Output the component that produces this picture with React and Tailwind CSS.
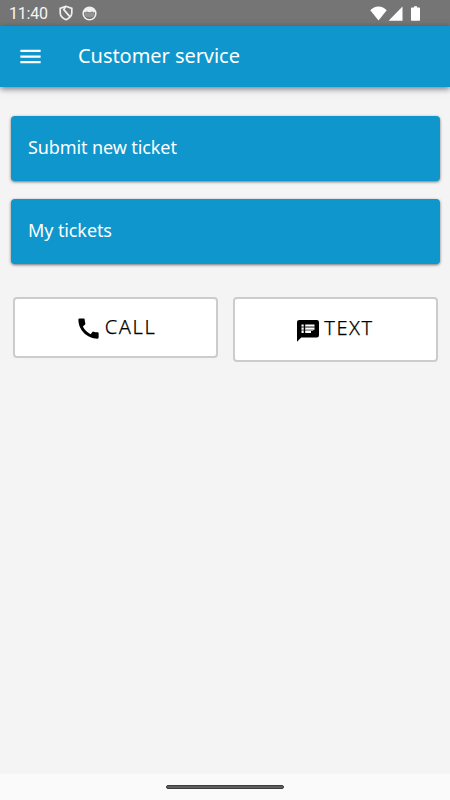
import { MdMenu, MdCall } from 'react-icons/md'

const items = ['Submit new ticket', 'My tickets']

function StatusBar() {
  return (
    <div className="h-[26px] shrink-0 bg-[#757575] text-white flex items-center pl-[9px] pr-[30px]">
      <span className="font-[Roboto] text-[16px] leading-[26px] w-[50px] pt-px tracking-[-0.2px] text-[#f5f5f5]">11:40</span>
      <svg className="w-[14px] h-4" viewBox="0 0 14 16" fill="none" stroke="#f0f0f0" strokeWidth="1.7">
        <path d="M7 1.3 1.2 3.4v4.4c0 3.2 2.3 5.6 5.8 6.9 3.5-1.3 5.8-3.7 5.8-6.9V3.4z" />
        <path d="M6.6 1.5 4.8 4.6 10.8 11.6" strokeWidth="1.7" />
      </svg>
      <svg className="w-[15px] h-[15px] ml-[9px]" viewBox="0 0 15 15">
        <circle cx="7.5" cy="7.5" r="6.3" fill="none" stroke="#f0f0f0" strokeWidth="1.6" />
        <path d="M1.8 5.5A6 6 0 0 1 13.2 5.5L11.8 6.6 10.5 5.4 7.5 6.2 4.5 5.4 3.2 6.6z" fill="#f0f0f0" />
        <path d="M3 6.5h9v3.2q-1 1.6-4.5 1.6T3 9.7z" fill="#f0f0f0" fillOpacity=".25" />
      </svg>
      <div className="ml-auto flex items-center">
        <svg className="w-[17px] h-[15px]" viewBox="0 0 17 15" fill="#fff">
          <path d="M8.5 14.6.3 4.2C2.5 2 5.3.4 8.5.4s6 1.6 8.2 3.8z" />
        </svg>
        <svg className="w-[15px] h-[15px] ml-px" viewBox="0 0 15 15" fill="#fff">
          <path d="M14.5.4v14.4H.6z" />
        </svg>
        <svg className="w-[9px] h-[15px] ml-2" viewBox="0 0 9 15" fill="#fff">
          <path d="M3 .2h3v1.3h2.2q.8 0 .8.8v11.7q0 .8-.8.8H.8q-.8 0-.8-.8V2.3q0-.8.8-.8H3z" />
        </svg>
      </div>
    </div>
  )
}

function NotesIcon() {
  return (
    <svg className="w-[22px] h-[22px] mt-[3px] mr-[5px]" viewBox="0 0 22 22">
      <path d="M2.2 0h17.6Q22 0 22 2.2v13.1q0 2.2-2.2 2.2H4.2L0 21.7V2.2Q0 0 2.2 0z" fill="#000" />
      <path d="M4.5 4.5h2.2v2H4.5zM4.5 7.7h2.2v2H4.5zM4.5 10.9h2.2v2H4.5zM8.2 4.5h9.3v2H8.2zM8.2 7.7h9.3v2H8.2zM8.2 10.9h5.8v2H8.2z" fill="#fff" />
      <path d="M4.5 6.5h2.2v1.2H4.5zM8.2 6.5h9.3v1.2H8.2zM4.5 9.7h2.2v1.2H4.5zM8.2 9.7h8v1.2h-8z" fill="#999" />
    </svg>
  )
}

export default function App() {
  return (
    <div className="w-[450px] h-[800px] flex flex-col bg-[#f4f4f4] overflow-hidden font-['Noto_Sans',sans-serif]">
      <StatusBar />
      <header className="h-[61px] shrink-0 bg-[#0e96cd] text-white flex items-center shadow-[0_2px_6px_rgba(0,0,0,0.5)]">
        <button type="button" className="ml-[17px] w-[27px]"><MdMenu size={27} /></button>
        <h1 className="ml-[34px] text-[20px] leading-7 pb-px tracking-[-0.05px] whitespace-nowrap">Customer service</h1>
      </header>

      <main className="flex-1 pt-[29px]">
        <div className="flex flex-col gap-[18px] pl-[11px] pr-[10px]">
          {items.map(label => (
            <div key={label} className="h-[65px] rounded bg-[#0e96cd] text-white flex items-center px-[17px] shadow-[0_1px_3px_rgba(0,0,0,0.55)]">
              <span className="text-[18px] leading-6 pb-[3px] tracking-[-0.1px]">{label}</span>
            </div>
          ))}
        </div>

        <div className="mt-[33px] pl-[13px] pr-3 flex items-start gap-[15px]">
          <button type="button" className="flex-1 h-[61px] rounded border-2 border-[#cccccc] bg-white text-black flex items-center justify-center">
            <MdCall size={27} className="mt-px mr-[3px]" />
            <span className="text-[20px] leading-6 tracking-[1.6px] font-light [-webkit-text-stroke:0.25px_black] pb-[2px]">CALL</span>
          </button>
          <button type="button" className="flex-1 h-[65px] rounded border-2 border-[#cccccc] bg-white text-black flex items-center justify-center">
            <NotesIcon />
            <span className="text-[20px] leading-6 tracking-[1.5px] font-light [-webkit-text-stroke:0.25px_black] pb-1">TEXT</span>
          </button>
        </div>
      </main>

      <div className="h-[26px] shrink-0 bg-[#fafafa] flex justify-center pt-[11px]">
        <div className="w-[118px] h-1 rounded-full bg-[#5e5e5e] border border-[#3c3c3c]" />
      </div>
    </div>
  )
}
